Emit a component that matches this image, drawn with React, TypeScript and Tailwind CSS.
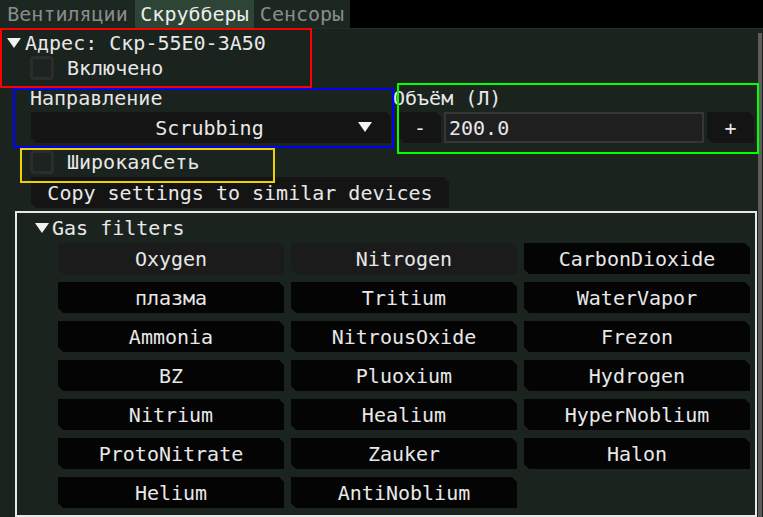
const cut =
  "[clip-path:polygon(0_0,calc(100%_-_5px)_0,100%_5px,100%_100%,5px_100%,0_calc(100%_-_5px))]";

const gases = [
  "Oxygen",
  "Nitrogen",
  "CarbonDioxide",
  "плазма",
  "Tritium",
  "WaterVapor",
  "Ammonia",
  "NitrousOxide",
  "Frezon",
  "BZ",
  "Pluoxium",
  "Hydrogen",
  "Nitrium",
  "Healium",
  "HyperNoblium",
  "ProtoNitrate",
  "Zauker",
  "Halon",
  "Helium",
  "AntiNoblium",
];

const active = ["Oxygen", "Nitrogen"];

function Arrow({ w = 14, h = 10 }: { w?: number; h?: number }) {
  return (
    <svg width={w} height={h} viewBox={`0 0 ${w} ${h}`} className="shrink-0">
      <polygon points={`0,0 ${w},0 ${w / 2},${h}`} fill="#f2f2f2" />
    </svg>
  );
}

function Checkbox() {
  return <div className="h-[24px] w-[24px] shrink-0 rounded-[4px] border-[3px] border-[#2a2d2b] bg-[#1d2320]" />;
}

export default function App() {
  return (
    <div className="relative flex h-[517px] w-[763px] flex-col overflow-hidden bg-black font-['DejaVu_Sans_Mono',monospace] text-[20px] leading-none text-[#e8e8e8]">
      {/* tabs */}
      <div className="flex h-[28px] shrink-0">
        <div className="flex w-[135px] items-center justify-center bg-[#1d2721] text-[#8a8d8b]">Вентиляции</div>
        <div className="flex w-[119px] items-center justify-center bg-[#2e4536] text-[#ececec]">Скрубберы</div>
        <div className="flex w-[96px] items-center justify-center bg-[#1d2721] text-[#8a8d8b]">Сенсоры</div>
      </div>

      <div className="flex flex-1 border-t border-[#252e29] bg-[#1b231f]">
        <div className="flex flex-1 flex-col">
          <div className="flex h-[27px] items-center gap-[4px] pl-[7px]">
            <Arrow />
            <span>Адрес: Скр-55E0-3A50</span>
          </div>
          <div className="flex h-[24px] items-center pl-[30px]">
            <Checkbox />
            <span className="ml-[13px]">Включено</span>
          </div>

          <div className="mt-[8px] flex">
            <div className="ml-[31px] flex w-[360px] flex-col">
              <div className="-ml-[1px] flex h-[20px] items-center">Направление</div>
              <div className={`relative mt-[4px] flex h-[31px] items-center justify-center bg-[#141414] pr-[3px] ${cut}`}>
                <span>Scrubbing</span>
                <span className="absolute right-[19px] top-[10px]">
                  <Arrow w={14} h={10} />
                </span>
              </div>
            </div>
            <div className="ml-[2px] flex w-[361px] flex-col">
              <div className="flex h-[20px] items-center">Объём (Л)</div>
              <div className="mt-[4px] flex h-[31px] gap-[3px] pl-[6px]">
                <div className={`flex w-[42px] items-center justify-center bg-[#141414] ${cut}`}>-</div>
                <div className="flex flex-1 items-center border-2 border-[#363636] bg-[#1f1f1f] pl-[3px]">200.0</div>
                <div className={`flex w-[47px] items-center justify-center bg-[#141414] ${cut}`}>+</div>
              </div>
            </div>
          </div>

          <div className="mt-[7px] flex h-[24px] items-center pl-[30px]">
            <Checkbox />
            <span className="ml-[13px]">ШирокаяСеть</span>
          </div>

          <div className={`ml-[31px] mt-[3px] flex h-[31px] w-[418px] items-center justify-center bg-[#141414] ${cut}`}>
            Copy settings to similar devices
          </div>

          <div className="ml-[15px] mr-[1px] mt-[3px] flex flex-1 flex-col border-2 border-[#e8e8e8]">
            <div className="flex h-[30px] items-center gap-[3px] pl-[18px]">
              <Arrow w={14} h={10} />
              <span>Gas filters</span>
            </div>
            <div className="ml-[41px] grid w-[692px] grid-cols-3 gap-x-[7px] gap-y-[8px]">
              {gases.map((g) => (
                <div
                  key={g}
                  className={`flex h-[31px] items-center justify-center ${cut} ${
                    active.includes(g) ? "bg-[#1b1b1b]" : "bg-[#040404]"
                  }`}
                >
                  {g}
                </div>
              ))}
            </div>
          </div>
        </div>
        <div className="mr-[1px] mt-[4px] w-[4px] bg-[#5c5c5c]" />
      </div>

      {/* debug outlines */}
      <div className="pointer-events-none absolute left-0 top-[28px] h-[60px] w-[312px] border-2 border-[#ff0000]" />
      <div className="pointer-events-none absolute left-[13px] top-[88px] h-[60px] w-[381px] border-2 border-[#0000ff]" />
      <div className="pointer-events-none absolute left-[397px] top-[83px] h-[71px] w-[362px] border-2 border-[#00ff00]" />
      <div className="pointer-events-none absolute left-[20px] top-[148px] h-[35px] w-[255px] border-2 border-[#f0d000]" />
    </div>
  );
}
